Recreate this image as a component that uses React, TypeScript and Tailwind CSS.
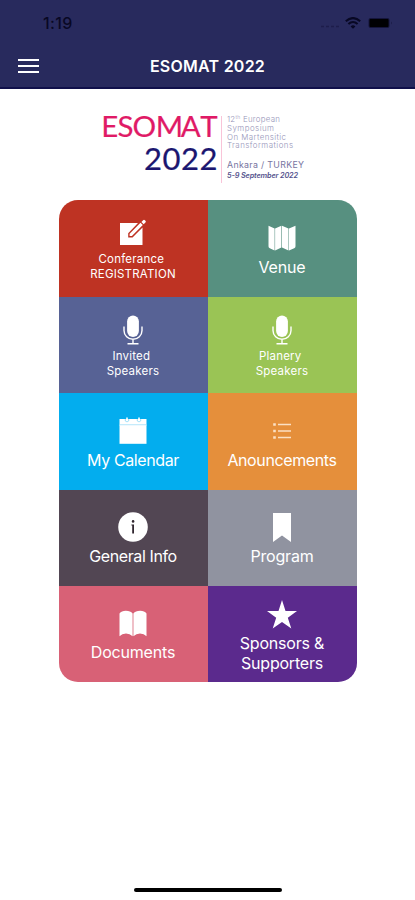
import type { ReactNode } from "react";
import clsx from "clsx";

interface Tile {
  id: string;
  color: string;
  // distance between the tile top and its icon
  offset: string;
  icon: ReactNode;
  lines: string[];
  label: string;
}

const EditIcon = () => (
  <svg width="28" height="27" viewBox="0 0 28 27" fill="currentColor">
    <path d="M1 4H19L9.2 14.2V18.5H13.5L23.5 8.6V26H1Z" />
    <path d="M10.6 17.1V14.8L21.5 3.8L23.8 6.1L12.9 17.1ZM22.4 2.9L24.1 1.2Q25 .3 25.9 1.2L26.4 1.7Q27.4 2.7 26.4 3.6L24.7 5.2Z" />
  </svg>
);

const MapIcon = () => (
  <svg width="28" height="26" viewBox="0 0 28 26" fill="currentColor">
    <path d="M.5 .8L6.6 3.4V25.4L1.8 23.2Q.5 22.5 .5 21.2ZM7.1 3.4L13.4 .8V22.6L7.1 25.4ZM14 .8L20.5 3.4V25.4L14 22.6ZM21 3.4L27.5 .8V21.2Q27.5 22.5 26.2 23.2L21 25.4Z" />
  </svg>
);

const MicIcon = () => (
  <svg width="20" height="30" viewBox="0 0 20 30" fill="none" stroke="currentColor">
    <rect x="4.1" y=".5" width="11.8" height="21.5" rx="5.9" fill="currentColor" stroke="none" />
    <path d="M1 11.5V15.5A9 8.8 0 0 0 19 15.5V11.5M10 24.2V28.5M4.5 28.8H15.5" strokeWidth="1.4" />
  </svg>
);

const CalendarIcon = () => (
  <svg width="28" height="27" viewBox="0 0 28 27">
    <path d="M.5 2H27.5V7.6H.5Z" fill="white" />
    <path d="M.5 7H27.5V9H.5Z" fill="#c5ebfb" />
    <path d="M.5 8.3H27.5V26.8H.5Z" fill="white" />
    <path d="M6.3 2V4Q8 5.8 9.7 4V2M18.3 2V4Q20 5.8 21.7 4V2" fill="none" stroke="#7bd2f5" strokeWidth=".7" />
    <path d="M7.2 .5H8.8V4H7.2ZM19.2 .5H20.8V4H19.2Z" fill="white" />
  </svg>
);

const ListIcon = () => (
  <svg width="18" height="18" viewBox="0 0 18 18" fill="none" stroke="#fbe0c4">
    <path d="M5 2.5H18M5 9H18M5 15.5H18" strokeWidth="1.3" />
    <path d="M.2 2.5H2.8M.2 9H2.8M.2 15.5H2.8" strokeWidth="2.3" />
  </svg>
);

const InfoIcon = () => (
  <svg width="30" height="30" viewBox="0 0 30 30">
    <circle cx="15" cy="15" r="14.8" fill="white" />
    <circle cx="15.1" cy="9.4" r="1.3" fill="#30262f" />
    <path d="M13.4 12.6H16V21.5H14.2V13.6H13.4Z" fill="#30262f" />
  </svg>
);

const BookmarkIcon = () => (
  <svg width="18" height="29" viewBox="0 0 18 29" fill="currentColor">
    <path d="M0 0H18V29L9 22.6L0 29Z" />
  </svg>
);

const BookIcon = () => (
  <svg width="28" height="27" viewBox="0 0 28 27" fill="currentColor">
    <path d="M.5 3.4Q2.5 .8 6.8 .8Q11.6 .8 13.6 3.4V26.3Q10.8 23.4 7 23.4Q3 23.4 .5 26.3ZM14.4 3.4Q16.4 .8 21.2 .8Q25.5 .8 27.5 3.4V26.3Q25 23.4 21 23.4Q17.2 23.4 14.4 26.3Z" />
  </svg>
);

const StarIcon = () => (
  <svg width="30" height="29" viewBox="0 0 30 29" fill="currentColor">
    <path d="M15 0L18.5 10.9H30L20.8 17.7L24.3 28.6L15 21.9L5.7 28.6L9.2 17.7L0 10.9H11.5Z" />
  </svg>
);

const small = "text-[11.5px] leading-[15px] tracking-[0.2px]";
const large = "text-base leading-5 tracking-[-0.2px]";
const largeTight = "text-base leading-5 tracking-[-0.38px]";

const tiles: Tile[] = [
  { id: "registration", color: "bg-[#be3323]", offset: "pt-[19px]", icon: <EditIcon />, lines: ["Conferance ", "REGISTRATION"], label: `mt-[6px] ${small}` },
  { id: "venue", color: "bg-[#579080]", offset: "pt-[25px]", icon: <MapIcon />, lines: ["Venue"], label: `mt-[6px] ${large}` },
  { id: "invited", color: "bg-[#576295]", offset: "pt-[18px]", icon: <MicIcon />, lines: ["Invited ", "Speakers"], label: `mt-[4px] ${small}` },
  { id: "plenary", color: "bg-[#9ac455]", offset: "pt-[18px]", icon: <MicIcon />, lines: ["Planery ", "Speakers"], label: `mt-[4px] ${small}` },
  { id: "calendar", color: "bg-[#03adee]", offset: "pt-[24px]", icon: <CalendarIcon />, lines: ["My Calendar"], label: `mt-[6px] ${largeTight}` },
  { id: "announcements", color: "bg-[#e58f3b]", offset: "pt-[29px]", icon: <ListIcon />, lines: ["Anouncements"], label: `mt-[10px] ${largeTight}` },
  { id: "info", color: "bg-[#524653]", offset: "pt-[22px]", icon: <InfoIcon />, lines: ["General Info"], label: `mt-[4px] ${largeTight}` },
  { id: "program", color: "bg-[#9093a0]", offset: "pt-[23px]", icon: <BookmarkIcon />, lines: ["Program"], label: `mt-[4px] ${large}` },
  { id: "documents", color: "bg-[#d86176]", offset: "pt-[24px]", icon: <BookIcon />, lines: ["Documents"], label: `mt-[5px] ${large}` },
  { id: "sponsors", color: "bg-[#5b2a8d]", offset: "pt-[14px]", icon: <StarIcon />, lines: ["Sponsors &", "Supporters"], label: `mt-[4px] ${large}` },
];

const StatusBar = () => (
  <div className="flex h-[46px] items-center justify-between pl-[43px] pr-[22px] text-[#080824]">
    <span className="text-base font-medium leading-5 tracking-[0.4px]">1:19</span>
    <div className="flex items-center">
      <svg width="20" height="12" viewBox="0 0 20 12">
        <path d="M1 9.5H4M6 9.5H9M11 9.5H14M16 9.5H19" stroke="#1d1d4b" strokeWidth="1.4" />
      </svg>
      <svg className="ml-[5px]" width="16" height="12" viewBox="0 0 16 12" fill="none" stroke="currentColor" strokeWidth="2.1">
        <path d="M.8 4.2Q8 -2.1 15.2 4.2M3.4 7Q8 3 12.6 7" />
        <path d="M8 11.8L5.6 9.4Q8 7.2 10.4 9.4Z" fill="currentColor" stroke="none" />
      </svg>
      <svg className="ml-[7px]" width="25" height="12" viewBox="0 0 25 12">
        <rect x=".5" y="1" width="21" height="10" rx="2" fill="#15153c" />
        <rect x="1.5" y="2" width="19" height="8" rx="1" fill="#000003" />
        <path d="M23 4.5Q24.5 6 23 7.5Z" fill="#15153c" />
      </svg>
    </div>
  </div>
);

const Header = () => (
  <header className="h-[89px] border-b-2 border-[#10104a] bg-[#282a5d]">
    <StatusBar />
    <div className="grid h-10 grid-cols-[50px_1fr_50px] items-center">
      <button className="flex flex-col gap-1 pl-[18px]" aria-label="Menu">
        <span className="h-[2px] w-[21px] bg-white" />
        <span className="h-[2px] w-[21px] bg-white" />
        <span className="h-[2px] w-[21px] bg-white" />
      </button>
      <h1 className="text-center text-base font-semibold leading-5 tracking-[0.25px] text-white">ESOMAT 2022</h1>
    </div>
  </header>
);

const EventLogo = () => (
  <svg className="mx-auto block" width="215" height="111" viewBox="100 89 215 111" fontFamily="Lato, sans-serif">
    <text x="101.3 117.6 132.4 155.7 180.8 200.2" y="137" fontSize="29.5" fill="#e01a66" stroke="#e01a66" strokeWidth=".2">ESOMAT</text>
    <text x="144" y="169.5" fontSize="31" textLength="73.5" fill="#1b1670" stroke="#1b1670" strokeWidth=".2">2022</text>
    <path d="M221.5 116V183" stroke="#f9c4d8" />
    <g fill="#9594b8" fontSize="7.9" fontFamily="Inter, sans-serif" fontWeight="300">
      <text x="227" y="122" textLength="53">12<tspan fontSize="5" dy="-3">th</tspan><tspan dy="3"> European</tspan></text>
      <text x="227" y="130.8" textLength="47">Symposium</text>
      <text x="227" y="139.5" textLength="59">On Martensitic</text>
      <text x="227" y="148.3" textLength="66">Transformations</text>
    </g>
    <text x="227" y="167.5" fontSize="8.8" textLength="77" fill="#77759f" fontFamily="Inter, sans-serif">Ankara / TURKEY</text>
    <text x="227" y="178" fontSize="7.3" textLength="71" fill="#55538d" fontFamily="Inter, sans-serif" fontStyle="italic" fontWeight="600">5-9 September 2022</text>
  </svg>
);

export default function App() {
  return (
    <div className="flex h-[900px] w-[415px] flex-col overflow-hidden bg-white font-['Inter',sans-serif]">
      <Header />
      <EventLogo />
      <main className="mx-auto mt-[0.4px] grid h-[482px] w-[298px] shrink-0 grid-cols-2 grid-rows-5 overflow-hidden rounded-[19px]">
        {tiles.map((tile) => (
          <button
            key={tile.id}
            className={clsx("flex flex-col items-center justify-start text-white", tile.color, tile.offset)}
          >
            {tile.icon}
            <span className={clsx("flex flex-col text-center whitespace-pre", tile.label)}>
              {tile.lines.map((line) => (
                <span key={line}>{line}</span>
              ))}
            </span>
          </button>
        ))}
      </main>
      {/* home indicator */}
      <div className="mx-auto mt-auto mb-2 h-1 w-[148px] rounded-full bg-black" />
    </div>
  );
}
